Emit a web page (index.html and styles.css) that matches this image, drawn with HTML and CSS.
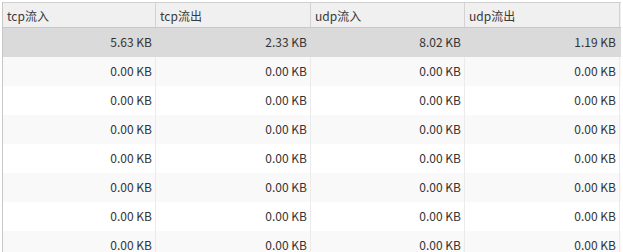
FILE: index.html
```html
<!DOCTYPE html>
<html>
<head>
<meta charset="utf-8">
<link rel="stylesheet" href="styles.css">
</head>
<body>
<div class="table">
  <div class="row head">
    <div class="cell">tcp流入</div>
    <div class="cell">tcp流出</div>
    <div class="cell">udp流入</div>
    <div class="cell">udp流出</div>
  </div>
  <div class="row sel">
    <div class="cell num">5.63 KB</div>
    <div class="cell num">2.33 KB</div>
    <div class="cell num">8.02 KB</div>
    <div class="cell num">1.19 KB</div>
  </div>
  <div class="row alt">
    <div class="cell num">0.00 KB</div><div class="cell num">0.00 KB</div><div class="cell num">0.00 KB</div><div class="cell num">0.00 KB</div>
  </div>
  <div class="row">
    <div class="cell num">0.00 KB</div><div class="cell num">0.00 KB</div><div class="cell num">0.00 KB</div><div class="cell num">0.00 KB</div>
  </div>
  <div class="row alt">
    <div class="cell num">0.00 KB</div><div class="cell num">0.00 KB</div><div class="cell num">0.00 KB</div><div class="cell num">0.00 KB</div>
  </div>
  <div class="row">
    <div class="cell num">0.00 KB</div><div class="cell num">0.00 KB</div><div class="cell num">0.00 KB</div><div class="cell num">0.00 KB</div>
  </div>
  <div class="row alt">
    <div class="cell num">0.00 KB</div><div class="cell num">0.00 KB</div><div class="cell num">0.00 KB</div><div class="cell num">0.00 KB</div>
  </div>
  <div class="row">
    <div class="cell num">0.00 KB</div><div class="cell num">0.00 KB</div><div class="cell num">0.00 KB</div><div class="cell num">0.00 KB</div>
  </div>
  <div class="row alt">
    <div class="cell num">0.00 KB</div><div class="cell num">0.00 KB</div><div class="cell num">0.00 KB</div><div class="cell num">0.00 KB</div>
  </div>
</div>
</body>
</html>
```
FILE: styles.css
```css
html, body {
  margin: 0;
  padding: 0;
  background: #ffffff;
  overflow: hidden;
}
.table {
  margin: 2px 0 0 2px;
  width: 618px;
  border-left: 1px solid #c8c8c8;
  font-family: "Noto Sans CJK SC", "Noto Sans", sans-serif;
  font-size: 12px;
  color: #333333;
}
.row {
  display: grid;
  grid-template-columns: 153px 155px 154px 155px;
  height: 29px;
}
.row.head {
  height: 24px;
  border-top: 1px solid #d0d0d0;
  border-bottom: 1px solid #c8c8c8;
  background: #f0f0f0;
}
.cell {
  display: flex;
  align-items: center;
  padding: 0 5px;
  border-right: 1px solid #ebebeb;
  white-space: nowrap;
  overflow: hidden;
}
.head .cell {
  border-right: 1px solid #d2d2d2;
  padding-left: 4px;
  color: #3a3a3a;
}
.cell.num {
  justify-content: flex-end;
  padding-right: 3px;
  padding-bottom: 2px;
}
.row.sel {
  background: #dadada;
}
.row.sel .cell {
  border-right-color: #dadada;
}
.row.alt {
  background: #f9f9f9;
}
```
